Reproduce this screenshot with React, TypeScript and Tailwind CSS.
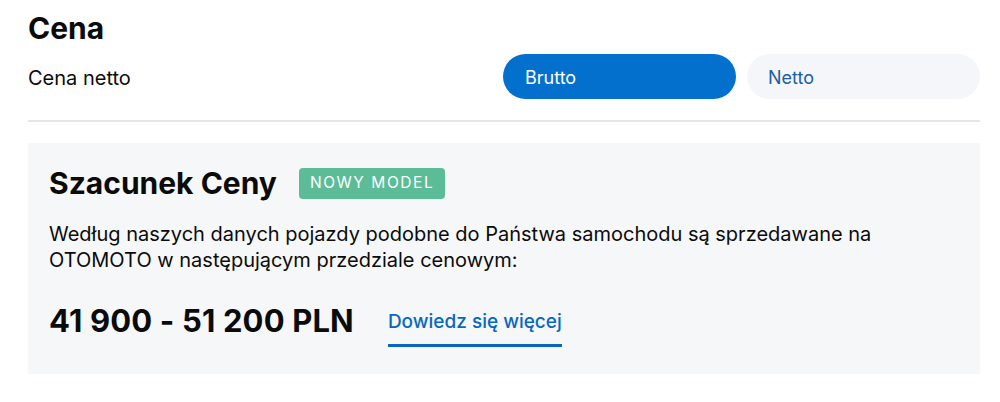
import React from 'react';

export default function App() {
  return (
    <div className="w-[1000px] h-[402px] bg-white overflow-hidden font-['Inter','Noto_Sans',sans-serif] text-[#0b0b0b]">
      <div className="px-[28px] pr-[20px]">
        <h1 className="pt-[10px] text-[30px] leading-[36px] font-bold">Cena</h1>
        <div className="mt-[8px] flex items-center">
          <span className="flex-1 pt-[3px] text-[20px]">Cena netto</span>
          <div className="flex gap-[11px]">
            <button className="w-[233px] h-[45px] pt-[1px] rounded-full bg-[#0270cc] text-white text-[18px] text-left pl-[22px]">
              Brutto
            </button>
            <button className="w-[233px] h-[45px] pt-[1px] rounded-full bg-[#f4f6f9] text-[#1b5ea6] text-[18px] text-left pl-[21px]">
              Netto
            </button>
          </div>
        </div>
        <div className="mt-[21px] h-[2px] bg-[#e6e6e6]" />
        <section className="mt-[21px] bg-[#f6f7f9] pl-[21px] pt-[22px] pb-[26px] h-[231px]">
          <div className="flex items-center gap-[22px]">
            <h2 className="text-[30px] leading-[36px] font-bold">Szacunek Ceny</h2>
            <span className="h-[31px] px-[11px] rounded-[4px] bg-[#5cbc97] text-white text-[15.5px] tracking-[1.55px] flex items-center">
              NOWY MODEL
            </span>
          </div>
          <p className="mt-[20px] text-[20px] leading-[26px] w-[860px]">
            Według naszych danych pojazdy podobne do Państwa samochodu są sprzedawane na OTOMOTO w następującym przedziale cenowym:
          </p>
          <div className="mt-[30px] flex items-start gap-[34px]">
            <span className="text-[31px] leading-[36px] font-bold tracking-[0.15px]">41 900 - 51 200 PLN</span>
            <a className="mt-[6px] text-[19px] leading-[26px] font-medium text-[#0a67bf] border-b-[3px] border-[#0a67bf] pb-[9px]">
              Dowiedz się więcej
            </a>
          </div>
        </section>
      </div>
    </div>
  );
}
